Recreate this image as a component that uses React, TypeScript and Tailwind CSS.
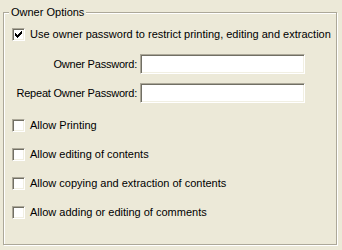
import React from "react";

const sunken =
  "border border-t-[#ACA899] border-l-[#ACA899] border-b-white border-r-white shadow-[inset_1px_1px_0_#716F64,inset_-1px_-1px_0_#F1EFE2] bg-white";

function Check({ checked }: { checked?: boolean }) {
  return (
    <div className={`w-[13px] h-[13px] shrink-0 ${sunken} flex items-center justify-center`}>
      {checked && (
        <svg width="7" height="7" viewBox="0 0 7 7" shapeRendering="crispEdges">
          <path
            d="M6 0h1v1H6zM5 1h2v1H5zM0 2h1v1H0zM4 2h3v1H4zM0 3h2v1H0zM3 3h3v1H3zM0 4h5v1H0zM1 5h3v1H1zM2 6h1v1H2z"
            fill="#000"
          />
        </svg>
      )}
    </div>
  );
}

function CheckRow({ label, checked, className }: { label: string; checked?: boolean; className?: string }) {
  return (
    <div className={`flex items-center h-[13px] pl-[8px] ${className ?? ""}`}>
      <Check checked={checked} />
      <span className="ml-[5px] whitespace-nowrap leading-[13px]">{label}</span>
    </div>
  );
}

function InputRow({ label, className }: { label: string; className?: string }) {
  return (
    <div className={`flex items-center h-[20px] ${className ?? ""}`}>
      <span className="w-[133px] text-right whitespace-nowrap leading-[13px] tracking-[-0.22px]">{label}</span>
      <div className={`ml-[3px] w-[165px] h-[20px] ${sunken}`} />
    </div>
  );
}

export default function App() {
  return (
    <div
      className="w-[342px] h-[250px] bg-[#ECE9D8] pt-[12px] pl-[3px] text-[11px] text-black"
      style={{ fontFamily: '"Liberation Sans", Arial, sans-serif' }}
    >
      <div className="relative w-[334px] h-[233px] border border-[#ACA899] shadow-[1px_1px_0_#fff,inset_1px_1px_0_#fff]">
        <span className="absolute left-[5px] top-[-7px] px-[2px] bg-[#ECE9D8] leading-[13px] whitespace-nowrap">
          Owner Options
        </span>
        <div className="flex flex-col">
          <CheckRow
            className="mt-[15px]"
            checked
            label="Use owner password to restrict printing, editing and extraction"
          />
          <InputRow className="mt-[13px]" label="Owner Password:" />
          <InputRow className="mt-[9px]" label="Repeat Owner Password:" />
          <CheckRow className="mt-[16px]" label="Allow Printing" />
          <CheckRow className="mt-[16px]" label="Allow editing of contents" />
          <CheckRow className="mt-[16px]" label="Allow copying and extraction of contents" />
          <CheckRow className="mt-[16px]" label="Allow adding or editing of comments" />
        </div>
      </div>
    </div>
  );
}
